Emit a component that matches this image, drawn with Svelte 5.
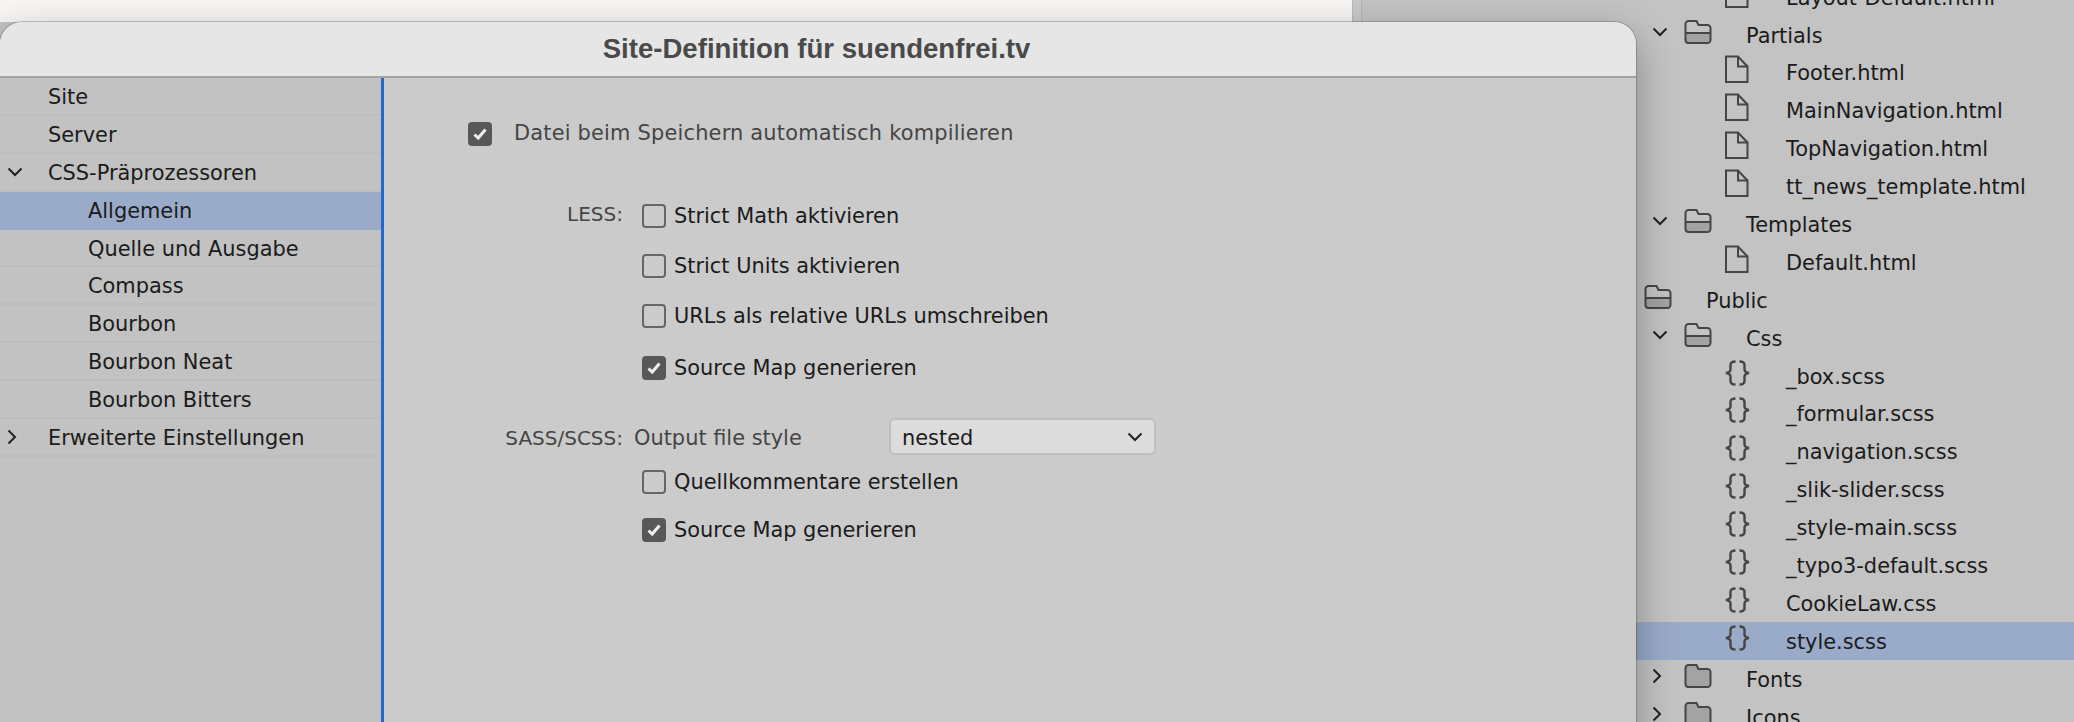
<script lang="ts">
	const sidebar = [
		{ label: 'Site', level: 0 },
		{ label: 'Server', level: 0 },
		{ label: 'CSS-Präprozessoren', level: 0, chevron: 'open' },
		{ label: 'Allgemein', level: 1, active: true },
		{ label: 'Quelle und Ausgabe', level: 1 },
		{ label: 'Compass', level: 1 },
		{ label: 'Bourbon', level: 1 },
		{ label: 'Bourbon Neat', level: 1 },
		{ label: 'Bourbon Bitters', level: 1 },
		{ label: 'Erweiterte Einstellungen', level: 0, chevron: 'closed' }
	];

	const tree = [
		{ label: 'Layout-Default.html', level: 2, icon: 'file' },
		{ label: 'Partials', level: 1, icon: 'open' },
		{ label: 'Footer.html', level: 2, icon: 'file' },
		{ label: 'MainNavigation.html', level: 2, icon: 'file' },
		{ label: 'TopNavigation.html', level: 2, icon: 'file' },
		{ label: 'tt_news_template.html', level: 2, icon: 'file' },
		{ label: 'Templates', level: 1, icon: 'open' },
		{ label: 'Default.html', level: 2, icon: 'file' },
		{ label: 'Public', level: 0, icon: 'open' },
		{ label: 'Css', level: 1, icon: 'open' },
		{ label: '_box.scss', level: 2, icon: 'code' },
		{ label: '_formular.scss', level: 2, icon: 'code' },
		{ label: '_navigation.scss', level: 2, icon: 'code' },
		{ label: '_slik-slider.scss', level: 2, icon: 'code' },
		{ label: '_style-main.scss', level: 2, icon: 'code' },
		{ label: '_typo3-default.scss', level: 2, icon: 'code' },
		{ label: 'CookieLaw.css', level: 2, icon: 'code' },
		{ label: 'style.scss', level: 2, icon: 'code', active: true },
		{ label: 'Fonts', level: 1, icon: 'closed' },
		{ label: 'Icons', level: 1, icon: 'closed' }
	];
</script>

{#snippet chevronDown()}
	<svg class="chev" width="16" height="10" viewBox="0 0 16 10"><path d="M1.5 1.5 8 8l6.5-6.5" /></svg>
{/snippet}

{#snippet chevronRight()}
	<svg class="chev" width="10" height="16" viewBox="0 0 10 16"><path d="M1.5 1.5 8 8l-6.5 6.5" /></svg>
{/snippet}

{#snippet check(on: boolean)}
	<span class="box" class:on>
		{#if on}
			<svg width="16" height="14" viewBox="0 0 16 14"><path d="M2.5 7.5 6.2 11 13.5 2.5" /></svg>
		{/if}
	</span>
{/snippet}

<div class="desktop">
	<div class="editor">
		<div class="editor-top"></div>
	</div>
	<div class="splitter"></div>

	<div class="files">
		{#each tree as row}
			<div class="file-row" class:active={row.active} style="padding-left: {250 + row.level * 40}px">
				<span class="twist">
					{#if row.icon === 'open'}
						{@render chevronDown()}
					{:else if row.icon === 'closed'}
						{@render chevronRight()}
					{/if}
				</span>
				<span class="ficon">
					{#if row.icon === 'file'}
						<svg class="file-svg" width="25" height="28" viewBox="0 0 25 28">
							<path d="M2 1.500h12l9.500 10V27H2z" /><path d="M14 1.500v10h9.500" />
						</svg>
					{:else if row.icon === 'code'}
						<svg class="code-svg" width="27" height="26" viewBox="0 0 27 26">
							<path d="M11.500 1.500c-3 0-5 .8-5 3.500v4.500c0 2-1.500 3-4.500 3.500 3 .5 4.500 1.500 4.500 3.500v4.500c0 2.700 2 3.500 5 3.500" />
							<path d="M15.500 1.500c3 0 5 .8 5 3.500v4.500c0 2 1.500 3 4.500 3.500-3 .5-4.500 1.500-4.500 3.500v4.500c0 2.700-2 3.500-5 3.500" />
						</svg>
					{:else}
						<svg class="folder-svg" width="28" height="24" viewBox="0 0 28 24">
							{#if row.icon === 'open'}
								<path class="fill" d="M1.500 13h25v7a3 3 0 0 1-3 3h-19a3 3 0 0 1-3-3z" />
								<path d="M1.500 13h25" />
							{:else}
								<path class="fill" d="M1.500 4a3 3 0 0 1 3-3h8l2 4h9a3 3 0 0 1 3 3v12a3 3 0 0 1-3 3h-19a3 3 0 0 1-3-3z" />
							{/if}
							<path d="M1.500 4a3 3 0 0 1 3-3h8l2 4h9a3 3 0 0 1 3 3v12a3 3 0 0 1-3 3h-19a3 3 0 0 1-3-3z" />
						</svg>
					{/if}
				</span>
				<span class="file-label">{row.label}</span>
			</div>
		{/each}
	</div>

	<section class="dialog">
		<header class="title">Site-Definition für suendenfrei.tv</header>
		<div class="dialog-body">
			<nav class="side">
				{#each sidebar as item}
					<div class="side-row" class:active={item.active} class:sub={item.level === 1}>
						{#if item.chevron === 'open'}
							<span class="side-twist">{@render chevronDown()}</span>
						{:else if item.chevron === 'closed'}
							<span class="side-twist">{@render chevronRight()}</span>
						{/if}
						{item.label}
					</div>
				{/each}
			</nav>

			<main class="form">
				<div class="auto-row">
					{@render check(true)}
					<span class="muted auto-label">Datei beim Speichern automatisch kompilieren</span>
				</div>

				<div class="group less">
					<span class="group-label">LESS:</span>
					<div class="opts">
						<label class="opt">{@render check(false)}<span>Strict Math aktivieren</span></label>
						<label class="opt">{@render check(false)}<span>Strict Units aktivieren</span></label>
						<label class="opt">{@render check(false)}<span>URLs als relative URLs umschreiben</span></label>
						<label class="opt last">{@render check(true)}<span>Source Map generieren</span></label>
					</div>
				</div>

				<div class="sass-row">
					<span class="group-label">SASS/SCSS:</span>
					<span class="muted style-label">Output file style</span>
					<div class="select">
						<span>nested</span>
						{@render chevronDown()}
					</div>
				</div>

				<div class="group sass">
					<span class="group-label"></span>
					<div class="opts tight">
						<label class="opt">{@render check(false)}<span>Quellkommentare erstellen</span></label>
						<label class="opt">{@render check(true)}<span>Source Map generieren</span></label>
					</div>
				</div>
			</main>
		</div>
	</section>
</div>

<style>
	:global(body) {
		background: #c3c3c3;
	}

	.desktop {
		position: relative;
		display: flex;
		width: 2074px;
		height: 722px;
		overflow: hidden;
		font-family: 'DejaVu Sans', sans-serif;
		font-size: 20.9px;
		color: #1b1b1b;
		background: #c3c3c3;
	}

	.editor {
		width: 1352px;
		flex-shrink: 0;
	}

	.editor-top {
		height: 22px;
		background: #f7f6f4;
	}

	.splitter {
		width: 10px;
		flex-shrink: 0;
		background: #c9c9c9;
		border-left: 1px solid #b9b9b9;
		border-right: 1px solid #b4b4b4;
		box-sizing: border-box;
	}

	.files {
		flex: 1;
		min-width: 0;
		margin-top: -22.3px;
	}

	.file-row {
		display: flex;
		align-items: center;
		height: 37.9px;
		box-sizing: border-box;
		white-space: nowrap;
	}

	.file-row.active {
		background: #9aabc9;
	}

	.twist {
		width: 32px;
		flex-shrink: 0;
		display: flex;
		box-sizing: border-box;
		transform: translateY(-3px);
	}

	.ficon {
		width: 62px;
		flex-shrink: 0;
		display: flex;
		transform: translateY(-3px);
	}

	.file-label {
		transform: translateY(1px);
	}

	.file-svg,
	.code-svg {
		fill: none;
		stroke: #454545;
		stroke-width: 2;
	}

	.code-svg {
		stroke-width: 2.4;
	}

	.folder-svg {
		fill: none;
		stroke: #454545;
		stroke-width: 2;
	}

	.folder-svg .fill {
		fill: #a3a3a3;
		stroke: none;
	}

	.chev {
		fill: none;
		stroke: #222;
		stroke-width: 2;
		flex-shrink: 0;
	}

	.dialog {
		position: absolute;
		left: 0;
		top: 22px;
		width: 1636px;
		height: 740px;
		display: flex;
		flex-direction: column;
		background: #cbcbcb;
		border-radius: 22px 22px 0 0;
		box-shadow: 0 14px 40px rgba(0, 0, 0, 0.32), 0 0 0 1px rgba(0, 0, 0, 0.2);
		overflow: hidden;
	}

	.title {
		height: 56px;
		flex-shrink: 0;
		box-sizing: border-box;
		background: #e6e6e6;
		border-bottom: 2px solid #a3a3a3;
		padding-right: 3px;
		text-align: center;
		font-family: 'Liberation Sans', sans-serif;
		font-weight: 700;
		font-size: 27.6px;
		line-height: 54px;
		color: #4a4a4a;
	}

	.dialog-body {
		flex: 1;
		display: flex;
		min-height: 0;
	}

	.side {
		width: 384px;
		flex-shrink: 0;
		box-sizing: border-box;
		background: #c2c2c2;
		border-right: 3px solid #2468cf;
	}

	.side-row {
		position: relative;
		height: 37.9px;
		box-sizing: border-box;
		padding-left: 48px;
		line-height: 38px;
		border-bottom: 2px solid #bdbdbd;
		white-space: nowrap;
	}

	.side-row.sub {
		padding-left: 88px;
	}

	.side-row.active {
		background: #9aabc9;
		border-bottom-color: #9aabc9;
	}

	.side-twist {
		position: absolute;
		left: 7px;
		top: 0;
		height: 36px;
		display: flex;
		align-items: center;
	}

	.form {
		flex: 1;
		padding: 44px 0 0 84px;
	}

	.muted {
		color: #454545;
	}

	.group-label {
		color: #454545;
		font-size: 20px;
	}

	.auto-row {
		display: flex;
		align-items: center;
		gap: 22px;
		height: 24px;
		margin-bottom: 58px;
	}

	.auto-label {
		letter-spacing: 0.2px;
		transform: translateY(-1px);
	}

	.box {
		width: 24px;
		height: 24px;
		flex-shrink: 0;
		box-sizing: border-box;
		border: 2px solid #666;
		border-radius: 4px;
		display: flex;
		align-items: center;
		justify-content: center;
	}

	.box.on {
		background: #585858;
		border-color: #585858;
	}

	.box svg {
		fill: none;
		stroke: #efefef;
		stroke-width: 3;
	}

	.group {
		display: flex;
		margin-left: -84px;
	}

	.group .group-label {
		width: 239px;
		flex-shrink: 0;
		text-align: right;
		line-height: 20px;
	}

	.opts {
		display: flex;
		flex-direction: column;
		gap: 26px;
		margin-left: 19px;
	}

	.opt {
		display: flex;
		align-items: center;
		gap: 8px;
		height: 24px;
		white-space: nowrap;
	}

	.opt.last {
		margin-top: 2px;
	}

	.opts.tight {
		gap: 24px;
	}

	.sass-row {
		display: flex;
		align-items: center;
		margin: 38px 0 15px -84px;
		height: 37px;
	}

	.sass-row > span,
	.select > span {
		transform: translateY(1px);
	}

	.sass-row .group-label {
		width: 239px;
		flex-shrink: 0;
		text-align: right;
	}

	.style-label {
		width: 255px;
		flex-shrink: 0;
		margin-left: 11px;
	}

	.select {
		width: 267px;
		height: 37px;
		box-sizing: border-box;
		display: flex;
		align-items: center;
		justify-content: space-between;
		padding: 0 11px 0 11px;
		background: #dcdcdc;
		border: 2px solid #bebebe;
		border-radius: 6px;
	}
</style>
